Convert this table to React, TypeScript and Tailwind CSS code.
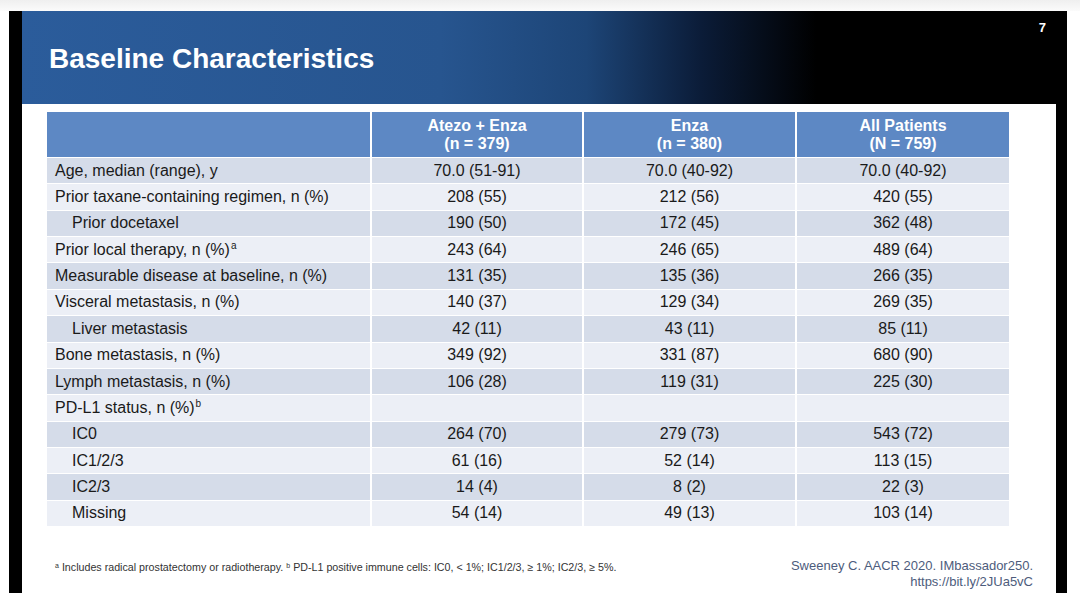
import React from "react";

type Row = { label: React.ReactNode; indent?: boolean; v: [string, string, string] };

const rows: Row[] = [
  { label: "Age, median (range), y", v: ["70.0 (51-91)", "70.0 (40-92)", "70.0 (40-92)"] },
  { label: "Prior taxane-containing regimen, n (%)", v: ["208 (55)", "212 (56)", "420 (55)"] },
  { label: "Prior docetaxel", indent: true, v: ["190 (50)", "172 (45)", "362 (48)"] },
  {
    label: (
      <>
        Prior local therapy, n (%)<sup className="text-[10px] relative -top-[6px] ml-[1px]">a</sup>
      </>
    ),
    v: ["243 (64)", "246 (65)", "489 (64)"],
  },
  { label: "Measurable disease at baseline, n (%)", v: ["131 (35)", "135 (36)", "266 (35)"] },
  { label: "Visceral metastasis, n (%)", v: ["140 (37)", "129 (34)", "269 (35)"] },
  { label: "Liver metastasis", indent: true, v: ["42 (11)", "43 (11)", "85 (11)"] },
  { label: "Bone metastasis, n (%)", v: ["349 (92)", "331 (87)", "680 (90)"] },
  { label: "Lymph metastasis, n (%)", v: ["106 (28)", "119 (31)", "225 (30)"] },
  {
    label: (
      <>
        PD-L1 status, n (%)<sup className="text-[10px] relative -top-[6px] ml-[1px]">b</sup>
      </>
    ),
    v: ["", "", ""],
  },
  { label: "IC0", indent: true, v: ["264 (70)", "279 (73)", "543 (72)"] },
  { label: "IC1/2/3", indent: true, v: ["61 (16)", "52 (14)", "113 (15)"] },
  { label: "IC2/3", indent: true, v: ["14 (4)", "8 (2)", "22 (3)"] },
  { label: "Missing", indent: true, v: ["54 (14)", "49 (13)", "103 (14)"] },
];

const heads: [string, string][] = [
  ["Atezo + Enza", "(n = 379)"],
  ["Enza", "(n = 380)"],
  ["All Patients", "(N = 759)"],
];

export default function App() {
  return (
    <div
      className="w-[1080px] h-[607px] bg-white overflow-hidden flex flex-col"
      style={{ fontFamily: '"Liberation Sans", Arial, sans-serif' }}
    >
      <div className="h-[11px] bg-linear-to-b from-[#efefef] to-[#fbfbfb]" />
      <div className="ml-[9px] w-[1058px] h-[582px] bg-black flex flex-col">
        <div className="ml-[13px] h-[93px] flex justify-between items-start bg-[linear-gradient(to_right,#2b5c9b_0%,#27558f_40%,#1d4577_54%,#0b1c38_65%,#000000_76%)]">
          <div className="pl-[27px] pt-[34px] text-[28px] leading-[28px] font-bold text-white">
            Baseline Characteristics
          </div>
          <div className="pt-[10px] pr-[21px] text-[13px] leading-[13px] font-bold text-white">7</div>
        </div>
        <div className="ml-[13px] mr-[11px] flex-1 bg-white flex flex-col">
          <div className="ml-[25px] mt-[8px] w-[962px] grid grid-cols-[323px_210px_211px_212px] grid-rows-[45px_repeat(14,25.36px)] gap-x-[2px] gap-y-[1px] bg-white text-[16px]">
            <div className="bg-[#5d88c4]" />
            {heads.map(([a, b]) => (
              <div
                key={a}
                className="bg-[#5d88c4] flex flex-col items-center justify-center text-white font-bold leading-[18px]"
              >
                <span>{a}</span>
                <span>{b}</span>
              </div>
            ))}
            {rows.map((r, i) => {
              const bg = i % 2 === 0 ? "bg-[#d5dce9]" : "bg-[#eceff6]";
              return (
                <React.Fragment key={i}>
                  <div
                    className={`${bg} flex items-center text-[#1a1a1a] leading-[18px] ${
                      r.indent ? "pl-[25px]" : "pl-[8px]"
                    }`}
                  >
                    <span>{r.label}</span>
                  </div>
                  {r.v.map((v, j) => (
                    <div key={j} className={`${bg} flex items-center justify-center text-[#1a1a1a] leading-[18px]`}>
                      {v}
                    </div>
                  ))}
                </React.Fragment>
              );
            })}
          </div>
          <div className="mt-[32px] flex justify-between items-start">
            <div className="pl-[33px] pt-[3px] text-[10.7px] leading-[12px] text-[#333333]">
              <sup className="text-[7px]">a</sup> Includes radical prostatectomy or radiotherapy.{" "}
              <sup className="text-[7px]">b</sup> PD-L1 positive immune cells: IC0, &lt; 1%; IC1/2/3, ≥ 1%; IC2/3, ≥ 5%.
            </div>
            <div className="pr-[23px] text-right text-[13px] leading-[16px] text-[#4d5c7c]">
              <div>Sweeney C. AACR 2020. IMbassador250.</div>
              <div>https://bit.ly/2JUa5vC</div>
            </div>
          </div>
        </div>
      </div>
    </div>
  );
}
